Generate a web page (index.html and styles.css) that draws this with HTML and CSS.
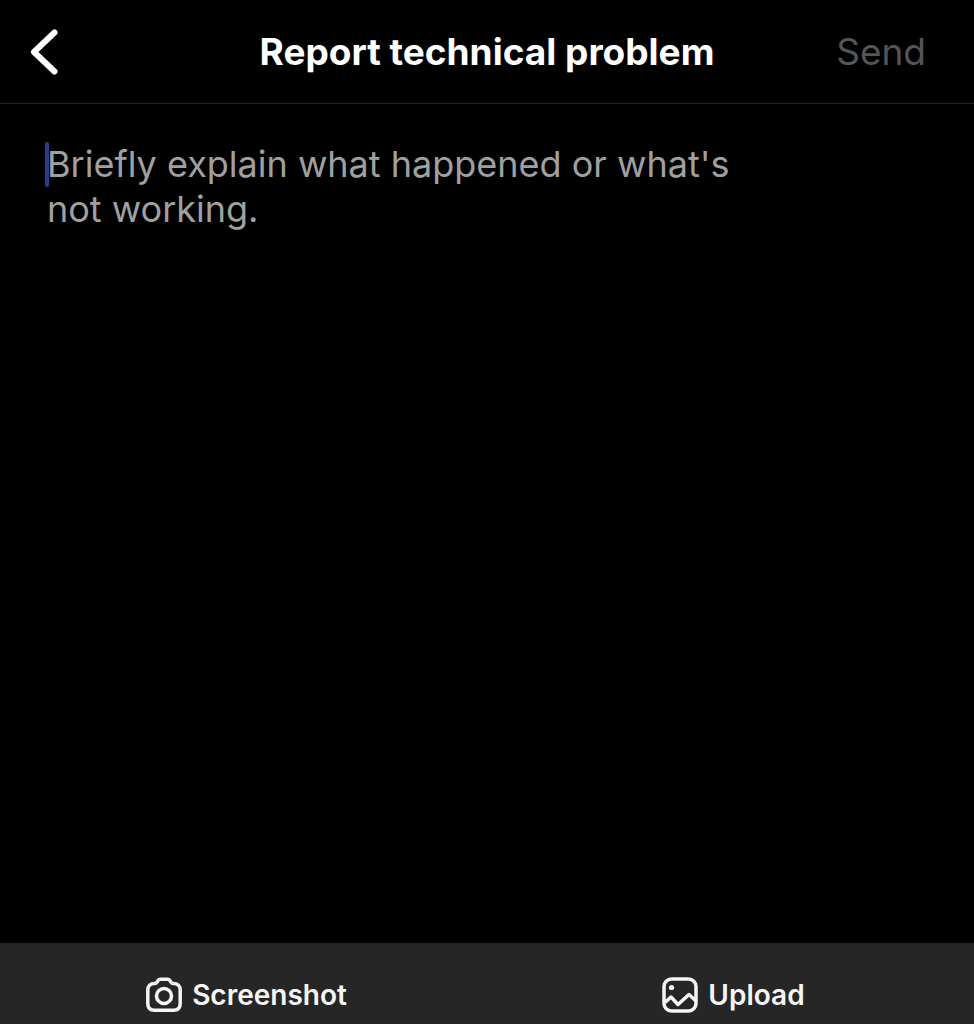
FILE: index.html
```html
<!DOCTYPE html>
<html lang="en">
<head>
<meta charset="utf-8">
<meta name="viewport" content="width=device-width, initial-scale=1">
<title>Report technical problem</title>
<link rel="stylesheet" href="styles.css">
</head>
<body>
<form class="report">
  <header class="header">
    <button class="back" type="button" aria-label="Back">
      <svg class="back-icon" viewBox="0 0 30 48" aria-hidden="true"><path d="M24.500 4.500 4 24 24.500 43.500"/></svg>
    </button>
    <h1 class="title">Report technical problem</h1>
    <button class="send" type="submit" disabled>Send</button>
  </header>
  <main class="editor">
    <textarea class="message" aria-label="Problem description" placeholder="Briefly explain what happened or what's not working."></textarea>
  </main>
  <footer class="toolbar">
    <button class="action" type="button">
      <svg class="icon" viewBox="0 0 36 36" aria-hidden="true">
        <path d="M8.500 6.500c1.800 0 2.300-.6 3-2 .8-1.600 1.600-2.300 3.200-2.300h6.600c1.600 0 2.400.7 3.200 2.300.7 1.400 1.200 2 3 2 4.200 0 6.700 2.500 6.700 6.500v13.500c0 4.500-2.200 6.700-6.700 6.700h-19c-4.500 0-6.700-2.200-6.700-6.700V13c0-4 2.500-6.500 6.700-6.500Z"/>
        <circle cx="18" cy="19" r="7.500"/>
      </svg>
      <span>Screenshot</span>
    </button>
    <button class="action" type="button">
      <svg class="icon" viewBox="0 0 36 36" aria-hidden="true">
        <rect x="2" y="2" width="32" height="32" rx="7.500"/>
        <path d="m3 25.500 6-5.500 7 7.500L27 17.500l7 6.500"/>
        <circle class="dot" cx="9.500" cy="10.500" r="2.600"/>
      </svg>
      <span>Upload</span>
    </button>
  </footer>
</form>
</body>
</html>
```
FILE: styles.css
```css
* {
  box-sizing: border-box;
}

body {
  margin: 0;
  background: #000;
  color: #fff;
  font-family: Inter, "Liberation Sans", sans-serif;
}

button {
  padding: 0;
  border: 0;
  background: none;
  color: inherit;
  font: inherit;
  cursor: pointer;
}

.report {
  display: flex;
  flex-direction: column;
  min-height: 100vh;
}

.header {
  display: grid;
  grid-template-columns: 1fr auto 1fr;
  align-items: center;
  padding: 28px 48px 27px 30px;
  border-bottom: 1px solid #242424;
}

.back {
  justify-self: start;
  display: flex;
}

.back-icon {
  width: 30px;
  height: 48px;
  fill: none;
  stroke: #fff;
  stroke-width: 6;
  stroke-linecap: round;
  stroke-linejoin: round;
}

.title {
  margin: 0;
  padding-left: 18px;
  font-size: 37px;
  line-height: 48px;
  font-weight: 700;
  text-align: center;
}

.send {
  justify-self: end;
  color: #555;
  font-size: 37px;
  line-height: 48px;
  cursor: default;
}

.editor {
  position: relative;
  flex: 1;
  display: flex;
  padding: 38px 22% 24px 47px;
}

/* Text cursor at the start of the empty field */
.editor::before {
  content: "";
  position: absolute;
  top: 38px;
  left: 45px;
  width: 4px;
  height: 45px;
  border-radius: 2px;
  background: #2d3c8a;
}

.message {
  flex: 1;
  min-width: 0;
  padding: 0;
  border: 0;
  outline: 0;
  resize: none;
  background: transparent;
  color: #fff;
  caret-color: #2d3c8a;
  font: 36px/45px Inter, "Liberation Sans", sans-serif;
}

.message::placeholder {
  color: #a0a0a0;
  opacity: 1;
}

.toolbar {
  display: grid;
  grid-template-columns: 1fr 1fr;
  padding: 34px 0 11px;
  background: #262626;
}

.action {
  display: flex;
  align-items: center;
  justify-content: center;
  gap: 10px;
  padding-left: 6px;
  color: #f5f5f5;
  font-size: 28px;
  line-height: 36px;
  font-weight: 600;
}

.icon {
  width: 36px;
  height: 36px;
  fill: none;
  stroke: currentColor;
  stroke-width: 3.500;
  stroke-linejoin: round;
}

.icon .dot {
  fill: currentColor;
  stroke: none;
}
```
